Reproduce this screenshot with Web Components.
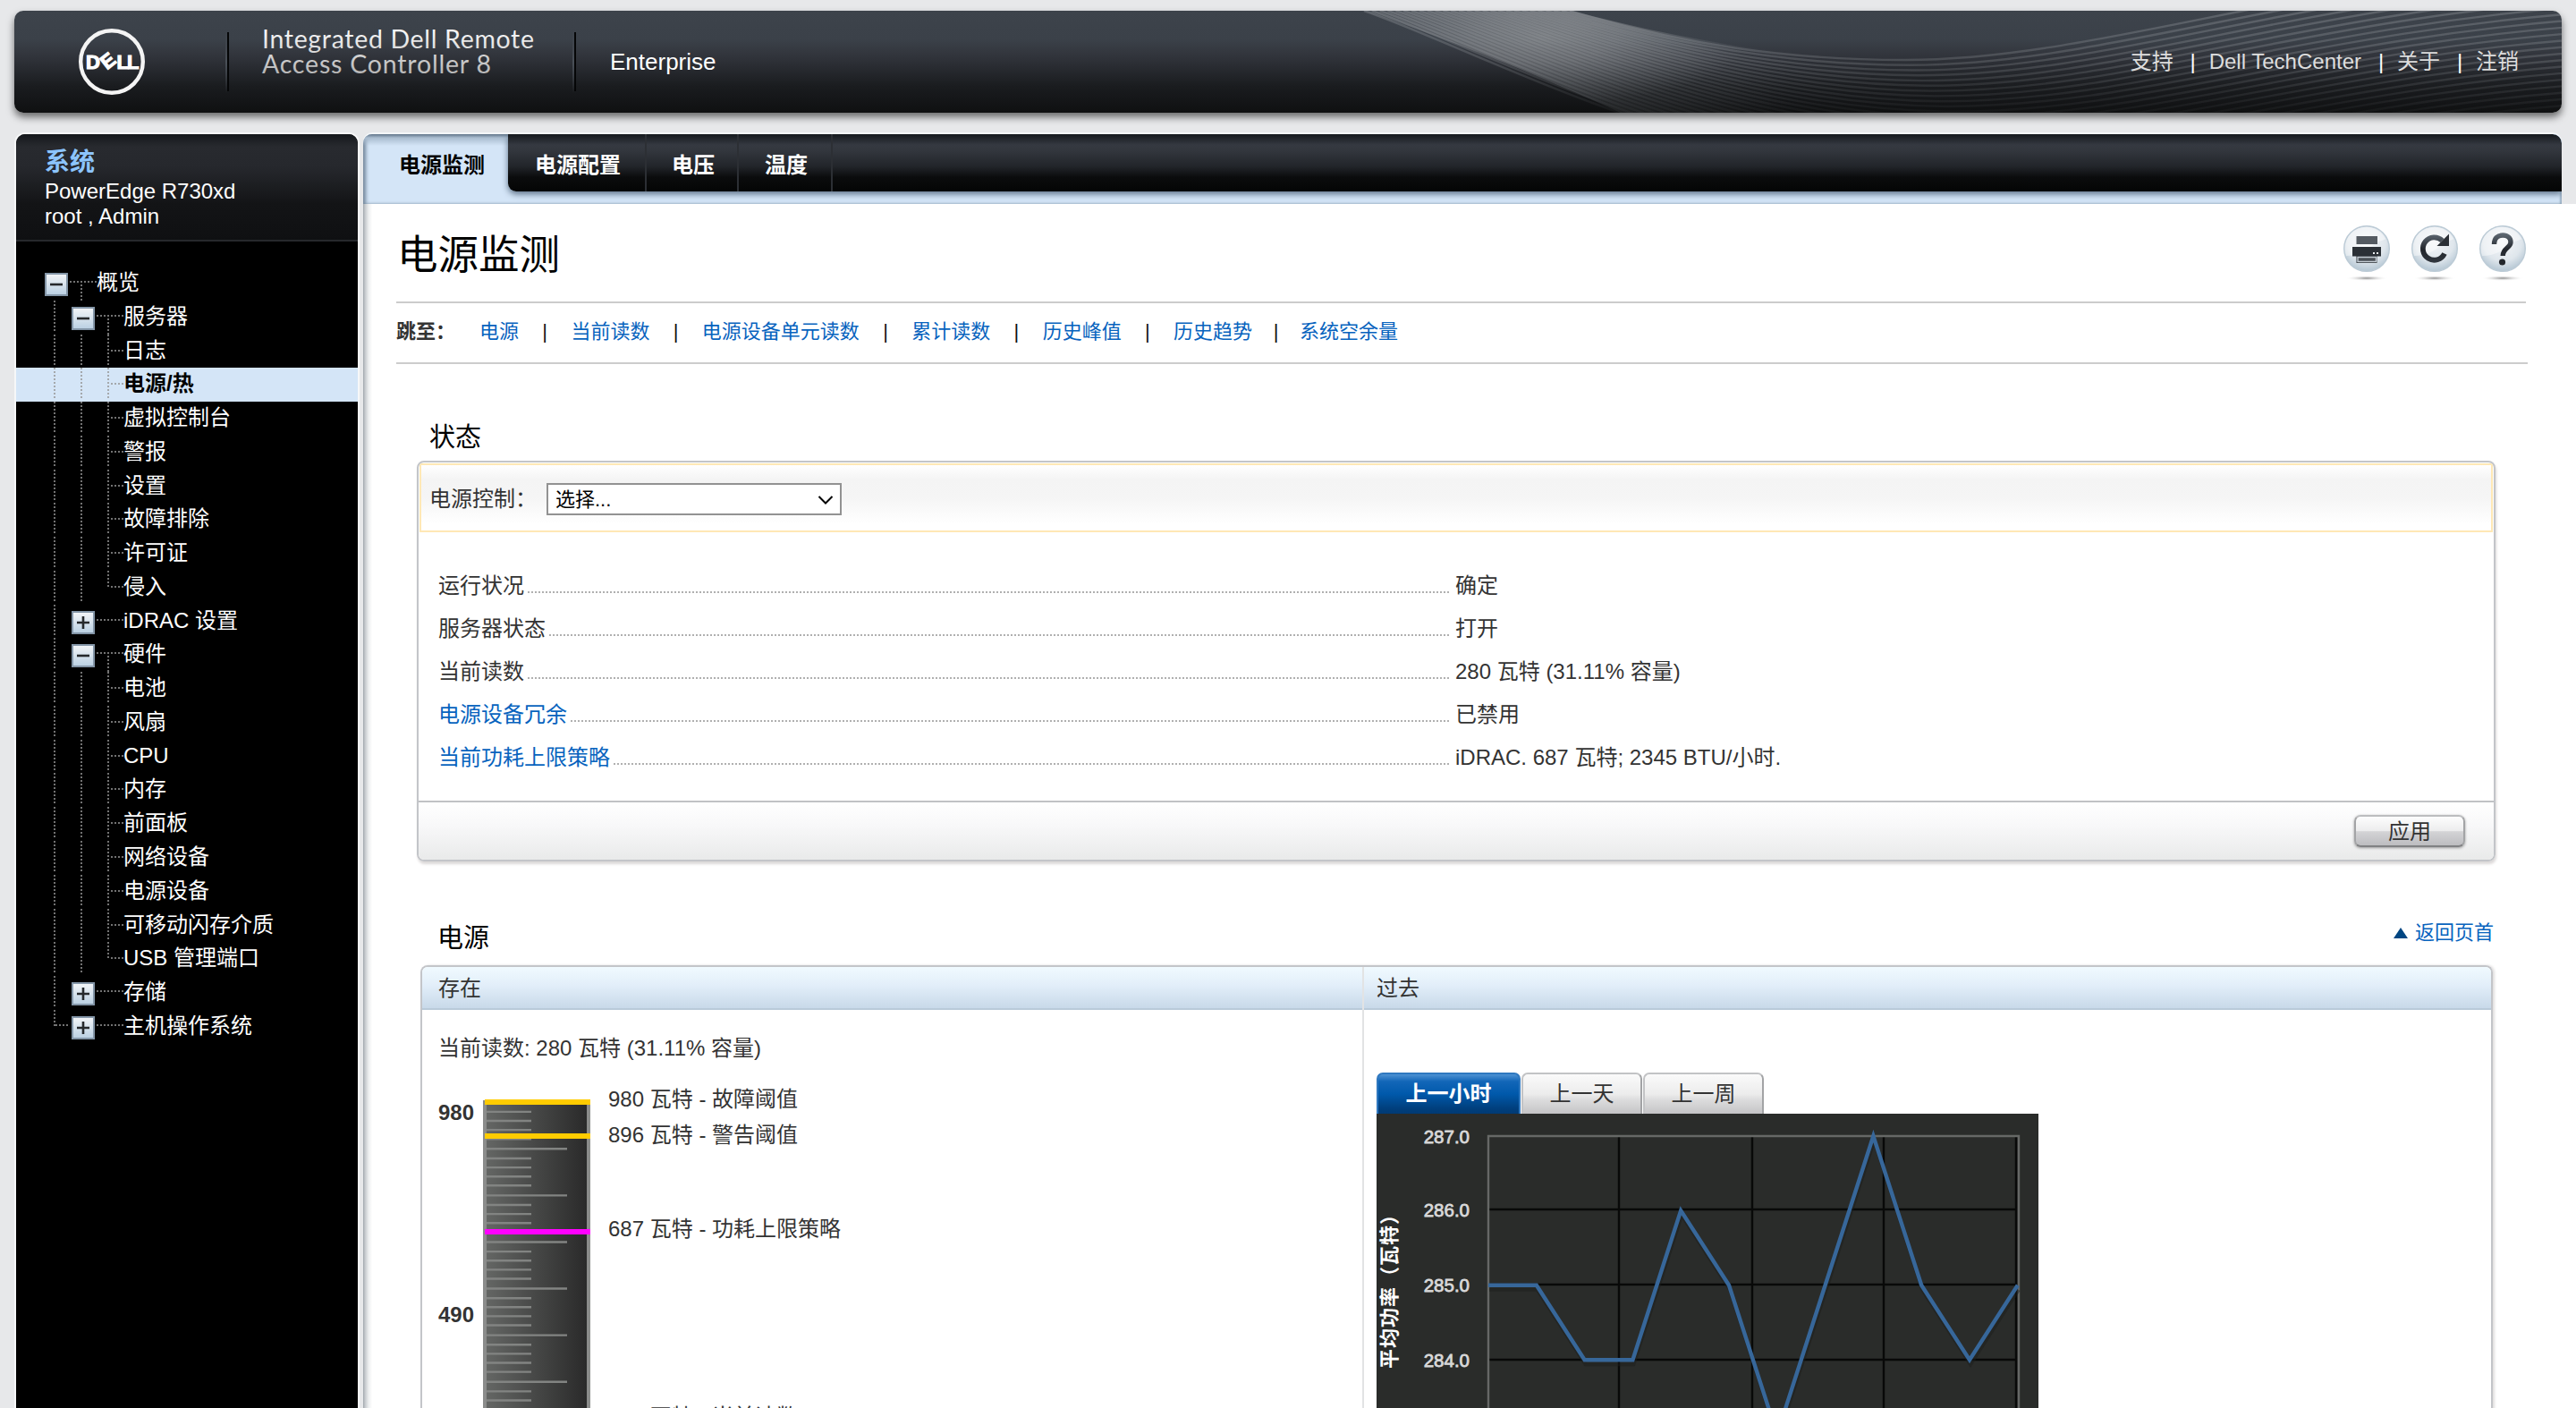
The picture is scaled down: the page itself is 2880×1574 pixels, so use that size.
<!DOCTYPE html>
<html lang="zh-CN">
<head>
<meta charset="utf-8">
<title>电源监测</title>
<style>
  html, body {
    height: 100%;
    margin: 0;
    overflow: hidden;
  }

  body {
    background-color: #e7e8ea;
    color: #333333;
    display: flex;
    flex-direction: column;
    font-family: 'Liberation Sans', 'Noto Sans CJK SC', sans-serif;
    font-size: 24px;
    line-height: 32px;
  }

  .columns {
    display: flex;
    flex: 1;
    flex-direction: row;
    margin-top: 24px;
    min-height: 0;
  }

  main {
    display: flex;
    flex: 1;
    flex-direction: column;
    margin-left: 6px;
    min-width: 0;
  }
</style>
</head>
<body>

<rac-header product="Enterprise">
  <a>支持</a>
  <a>Dell TechCenter</a>
  <a>关于</a>
  <a>注销</a>
</rac-header>

<div class="columns">
  <rac-sidebar>
    <span slot="title">系统</span>
    <span slot="model">PowerEdge R730xd</span>
    <span slot="user">root , Admin</span>
    <rac-node toggle="minus" root>概览</rac-node>
    <rac-node toggle="minus">服务器</rac-node>
    <rac-node>日志</rac-node>
    <rac-node selected>电源/热</rac-node>
    <rac-node>虚拟控制台</rac-node>
    <rac-node>警报</rac-node>
    <rac-node>设置</rac-node>
    <rac-node>故障排除</rac-node>
    <rac-node>许可证</rac-node>
    <rac-node last>侵入</rac-node>
    <rac-node toggle="plus">iDRAC 设置</rac-node>
    <rac-node toggle="minus">硬件</rac-node>
    <rac-node>电池</rac-node>
    <rac-node>风扇</rac-node>
    <rac-node>CPU</rac-node>
    <rac-node>内存</rac-node>
    <rac-node>前面板</rac-node>
    <rac-node>网络设备</rac-node>
    <rac-node>电源设备</rac-node>
    <rac-node>可移动闪存介质</rac-node>
    <rac-node last>USB 管理端口</rac-node>
    <rac-node toggle="plus">存储</rac-node>
    <rac-node toggle="plus" last>主机操作系统</rac-node>
  </rac-sidebar>

  <main>
    <rac-tabs>
      <rac-tab selected style="width: 162px">电源监测</rac-tab>
      <rac-tab style="width: 155px">电源配置</rac-tab>
      <rac-tab style="width: 103px">电压</rac-tab>
      <rac-tab style="width: 105px">温度</rac-tab>
    </rac-tabs>

    <rac-page label="电源监测">
      <rac-tool slot="tools" icon="print"></rac-tool>
      <rac-tool slot="tools" icon="refresh"></rac-tool>
      <rac-tool slot="tools" icon="help"></rac-tool>

      <rac-jump label="跳至：">
        <a>电源</a>
        <a>当前读数</a>
        <a>电源设备单元读数</a>
        <a>累计读数</a>
        <a>历史峰值</a>
        <a>历史趋势</a>
        <a>系统空余量</a>
      </rac-jump>

      <rac-status label="状态">
        <span slot="control">电源控制：</span>
        <rac-select slot="control">选择...</rac-select>
        <rac-field label="运行状况">确定</rac-field>
        <rac-field label="服务器状态">打开</rac-field>
        <rac-field label="当前读数">280 瓦特 (31.11% 容量)</rac-field>
        <rac-field label="电源设备冗余" link>已禁用</rac-field>
        <rac-field label="当前功耗上限策略" link>iDRAC. 687 瓦特; 2345 BTU/小时.</rac-field>
        <rac-button slot="actions">应用</rac-button>
      </rac-status>

      <rac-power label="电源" top="返回页首" present="存在" past="过去">
        <span slot="reading">当前读数: 280 瓦特 (31.11% 容量)</span>
        <rac-gauge slot="gauge"></rac-gauge>
        <rac-range slot="range" selected>上一小时</rac-range>
        <rac-range slot="range">上一天</rac-range>
        <rac-range slot="range">上一周</rac-range>
        <rac-chart slot="chart"></rac-chart>
      </rac-power>
    </rac-page>
  </main>
</div>

<script>
// Shared shadow root setup
class RacElement extends HTMLElement {
  constructor( markup ) {
    super();

    const template = document.createElement( 'template' );
    template.innerHTML = markup;

    this.attachShadow( {mode: 'open'} );
    this.shadowRoot.appendChild( template.content.cloneNode( true ) );
  }

  // Copy attribute value to an element in the root
  _text( selector, attribute ) {
    this.shadowRoot.querySelector( selector ).textContent = this.getAttribute( attribute ) || '';
  }
}

class RacHeader extends RacElement {
  constructor() {
    super( /* template */ `
      <style>
        :host {
          background: linear-gradient( #3d434b 0%, #3b4149 28%, #30333a 46%, #1a1c1f 74%, #0f1011 100% );
          border-radius: 10px;
          box-shadow: 0 5px 8px rgba( 0, 0, 0, 0.55 );
          box-sizing: border-box;
          color: #ffffff;
          display: flex;
          flex-direction: row;
          flex-shrink: 0;
          height: 114px;
          margin: 12px 16px 0 16px;
          position: relative;
        }

        svg.brand {
          flex-shrink: 0;
          height: 114px;
          width: 630px;
        }

        svg.wave {
          border-radius: 0 10px 10px 0;
          height: 114px;
          position: absolute;
          right: 0;
          top: 0;
          width: 1354px;
        }

        p {
          font-size: 26px;
          line-height: 114px;
          margin: 0 0 0 36px;
        }

        nav {
          align-items: center;
          color: #dddddd;
          display: flex;
          margin-left: auto;
          padding-right: 48px;
          position: relative;
        }

        ::slotted( a ) {
          white-space: nowrap;
        }
      </style>
      <svg class="brand" viewBox="16 12 630 114">
        <defs>
          <linearGradient id="ink" x1="0" y1="30" x2="0" y2="84" gradientUnits="userSpaceOnUse">
            <stop offset="0" stop-color="#ffffff"/>
            <stop offset="1" stop-color="#b4b4b4"/>
          </linearGradient>
          <linearGradient id="rule" x1="0" y1="34" x2="0" y2="104" gradientUnits="userSpaceOnUse">
            <stop offset="0" stop-color="#4a5058" stop-opacity="0"/>
            <stop offset="0.5" stop-color="#4a5058"/>
            <stop offset="1" stop-color="#4a5058" stop-opacity="0"/>
          </linearGradient>
        </defs>
        <circle cx="125" cy="69" r="34.8" fill="none" stroke="#f4f4f4" stroke-width="4.4"/>
        <text x="96 119.5 130.5 142" y="77 78.5 77 77" rotate="0 -38 0 0" fill="#ffffff" stroke="#ffffff" stroke-width="1.2" font-size="22" font-weight="700">DELL</text>
        <path d="M252 34H254V104H252ZM640 34H642V104H640Z" fill="url( #rule )"/>
        <path d="M255 36V102M643 36V102" stroke="#050607" stroke-width="2"/>
        <g fill="url( #ink )" font-family="Lato, sans-serif" font-size="28.5">
          <text x="293" y="54" textLength="304">Integrated Dell Remote</text>
          <text x="293" y="82" textLength="256">Access Controller 8</text>
        </g>
      </svg>
      <p></p>
      <svg class="wave" viewBox="1510 12 1354 114">
        <defs>
          <radialGradient id="glow" cx="0" cy="0" r="1" gradientUnits="userSpaceOnUse" gradientTransform="translate( 1725 42 ) scale( 230 75 )">
            <stop offset="0" stop-color="#8c8f92" stop-opacity="0.65"/>
            <stop offset="0.35" stop-color="#85888c" stop-opacity="0.5"/>
            <stop offset="1" stop-color="#70747a" stop-opacity="0"/>
          </radialGradient>
          <linearGradient id="haze" x1="1520" y1="0" x2="2000" y2="0" gradientUnits="userSpaceOnUse">
            <stop offset="0" stop-color="#90959a" stop-opacity="0.1"/>
            <stop offset="0.5" stop-color="#90959a" stop-opacity="0.16"/>
            <stop offset="1" stop-color="#90959a" stop-opacity="0"/>
          </linearGradient>
          <linearGradient id="fade" x1="0" y1="12" x2="0" y2="126" gradientUnits="userSpaceOnUse">
            <stop offset="0" stop-color="#a9adb2" stop-opacity="0.3"/>
            <stop offset="0.5" stop-color="#a0a4a8" stop-opacity="0.24"/>
            <stop offset="1" stop-color="#90959a" stop-opacity="0.05"/>
          </linearGradient>
        </defs>
        <path d="M1525 12C1580 30 1690 70 1812 126H2050V65C1950 55 1850 37 1757 12Z" fill="url( #haze )"/>
        <path d="M1525 12C1580 30 1690 70 1812 126H2050V65C1950 55 1850 37 1757 12Z" fill="url( #glow )"/>
        <g fill="none" stroke="url( #fade )" stroke-width="2.4"></g>
      </svg>
      <nav><slot></slot></nav>
    ` );

    // Fan of lines between the upper and the lower edge of the wave
    const from = [1755, 12, 1880, 50, 2000, 67, 2130, 67, 2340, 67, 2560, -20, 2900, -45];
    const to = [1525, 12, 1640, 50, 1930, 210, 2250, 217, 2480, 222, 2640, 160, 2900, 145];
    const group = this.shadowRoot.querySelector( 'svg.wave g' );
    const count = 27;

    for( let i = 0; i < count; i++ ) {
      const t = i / ( count - 1 );
      const p = from.map( ( value, index ) => ( value + ( to[index] - value ) * t ).toFixed( 1 ) );
      const path = document.createElementNS( 'http://www.w3.org/2000/svg', 'path' );
      path.setAttribute( 'd', `M${p.slice( 0, 2 )}C${p.slice( 2 )}` );
      group.appendChild( path );
    }
  }

  connectedCallback() {
    this._text( 'p', 'product' );

    // Divider before every link except the first
    this.querySelectorAll( 'a' ).forEach( ( link, index ) => {
      if( index > 0 ) {
        const bar = document.createElement( 'span' );
        bar.textContent = '|';
        bar.style.cssText = 'color: #ffffff; text-align: center; text-indent: 4px; width: 40px';
        this.insertBefore( bar, link );
      }
    } );
  }
}

class RacSidebar extends RacElement {
  constructor() {
    super( /* template */ `
      <style>
        :host {
          background-color: #000000;
          border-radius: 10px 10px 0 0;
          box-shadow: 0 0 0 2px #f6f7f8;
          box-sizing: border-box;
          color: #ffffff;
          display: flex;
          flex-direction: column;
          margin-left: 18px;
          width: 382px;
        }

        header {
          background: linear-gradient( #14171b 0, #282a2f 14px, #26282d 36px, #131416 78px, #0f1012 100% );
          border-bottom: 2px solid #26282c;
          border-radius: 10px 10px 0 0;
          box-sizing: border-box;
          display: flex;
          flex-direction: column;
          height: 120px;
          line-height: 28px;
          padding: 13px 0 0 32px;
        }

        header slot {
          display: block;
        }

        slot[name=title] {
          color: #8cc4fc;
          font-size: 28px;
          font-weight: 700;
          line-height: 37px;
        }

        nav {
          display: flex;
          flex-direction: column;
          padding-top: 28px;
        }
      </style>
      <header>
        <slot name="title"></slot>
        <slot name="model"></slot>
        <slot name="user"></slot>
      </header>
      <nav><slot></slot></nav>
    ` );
  }
}

class RacNode extends RacElement {
  constructor() {
    super( /* template */ `
      <style>
        :host {
          display: flex;
          flex-direction: row;
          height: 37.78px;
          line-height: 36px;
          white-space: nowrap;
        }

        :host( [selected] ) {
          background-color: #d4e5f7;
          color: #000000;
          font-weight: 700;
        }

        svg {
          flex-shrink: 0;
          height: 38px;
          width: 120px;
        }

        :host( [root] ) svg {
          width: 90px;
        }

        path.guide {
          fill: none;
          stroke: #727272;
          stroke-dasharray: 2 2;
          stroke-width: 2;
        }

        :host( [selected] ) path.guide {
          stroke: #a4a8ac;
        }
      </style>
      <svg>
        <defs>
          <linearGradient id="face" x1="0" y1="0" x2="0" y2="1">
            <stop offset="0" stop-color="#f4f6f8"/>
            <stop offset="1" stop-color="#b9cfe2"/>
          </linearGradient>
        </defs>
        <path class="guide"></path>
        <g class="box">
          <rect x="1" y="1" width="24" height="24" fill="url( #face )" stroke="#8496a8" stroke-width="2"/>
          <path class="sign" stroke="#26292c" stroke-width="2.6"></path>
        </g>
      </svg>
      <slot></slot>
    ` );
  }

  connectedCallback() {
    const toggle = this.getAttribute( 'toggle' );
    const root = this.hasAttribute( 'root' );
    const last = this.hasAttribute( 'last' );
    const box = this.shadowRoot.querySelector( '.box' );
    let d = '';

    if( root ) {
      d = 'M60 17H90M73 20V38';
    } else if( toggle ) {
      d = last ? 'M43 0V18M44 17H60M90 17H120' : 'M43 0V36M90 17H120';
      d += toggle === 'minus' ? 'M103 20V38' : '';
    } else {
      d = 'M43 0V36M73 0V36M106 18H120';
      d += last ? 'M103 0V20' : 'M103 0V36';
    }

    this.shadowRoot.querySelector( '.guide' ).setAttribute( 'd', d );

    if( toggle ) {
      box.setAttribute( 'transform', `translate( ${root ? 32 : 62} 7 )` );
      this.shadowRoot.querySelector( '.sign' ).setAttribute( 'd', toggle === 'minus' ? 'M6 13H20' : 'M6 13H20M13 6V20' );
    } else {
      box.remove();
    }
  }
}

class RacTabs extends RacElement {
  constructor() {
    super( /* template */ `
      <style>
        :host {
          background-color: #d4e5f7;
          border-radius: 10px 10px 0 0;
          box-shadow: 0 -2px 0 #f3f6f8, inset 4px 0 4px -1px #71859a, inset -2px 0 2px #9db2c6;
          display: flex;
          flex-direction: row;
          flex-shrink: 0;
          height: 78px;
          margin-right: 16px;
          overflow: hidden;
        }

        div {
          background: linear-gradient( #15191d 0, #353941 12px, #33373e 18px, #22252a 36px, #0b0c0d 48px, #040505 100% );
          border-radius: 0 10px 0 9px;
          box-shadow: 0 3px 7px #5d7187;
          display: flex;
          flex: 1;
          height: 64px;
        }
      </style>
      <slot name="selected"></slot>
      <div><slot></slot></div>
    ` );
  }

  connectedCallback() {
    const selected = this.querySelector( '[selected]' );

    if( selected !== null ) {
      selected.slot = 'selected';
    }
  }
}

class RacTab extends RacElement {
  constructor() {
    super( /* template */ `
      <style>
        :host {
          border-right: 2px solid #2c2f34;
          box-sizing: border-box;
          color: #ffffff;
          display: block;
          font-weight: 700;
          height: 64px;
          line-height: 70px;
          padding-left: 3px;
          text-align: center;
        }

        :host( [selected] ) {
          background: linear-gradient( #5f7489 0, #a9bccf 4px, rgba( 212, 229, 247, 0 ) 13px );
          border: none;
          color: #000000;
          padding-left: 14px;
        }
      </style>
      <slot></slot>
    ` );
  }
}

class RacPage extends RacElement {
  constructor() {
    super( /* template */ `
      <style>
        :host {
          background: linear-gradient( to right, #9fa5ab 0, #c4c8cc 2px, #eceeef 6px, #ffffff 10px );
          display: flex;
          flex: 1;
          flex-direction: column;
          min-height: 0;
          overflow: hidden;
          padding: 0 54px 0 37px;
        }

        header {
          border-bottom: 2px solid #cccccc;
          box-sizing: border-box;
          display: flex;
          flex-shrink: 0;
          gap: 24px;
          height: 111px;
          margin-right: 2px;
        }

        h1 {
          color: #000000;
          flex: 1;
          font-size: 45.5px;
          font-weight: 400;
          line-height: 116px;
          margin: 0;
          padding-left: 1px;
        }
      </style>
      <header>
        <h1></h1>
        <slot name="tools"></slot>
      </header>
      <slot></slot>
    ` );
  }

  connectedCallback() {
    this._text( 'h1', 'label' );
  }
}

class RacTool extends RacElement {
  constructor() {
    super( /* template */ `
      <style>
        :host {
          display: block;
          height: 64px;
          padding-top: 24px;
          width: 52px;
        }

        svg {
          display: block;
        }
      </style>
      <svg width="52" height="62" viewBox="0 0 52 62">
        <defs>
          <radialGradient id="ball" cx="0.5" cy="0.35" r="0.65">
            <stop offset="0" stop-color="#f4f6f8"/>
            <stop offset="0.65" stop-color="#dfe6ec"/>
            <stop offset="1" stop-color="#b4c6d3"/>
          </radialGradient>
          <linearGradient id="dark" x1="0" y1="10" x2="0" y2="44" gradientUnits="userSpaceOnUse">
            <stop offset="0" stop-color="#5c6670"/>
            <stop offset="0.5" stop-color="#22262c"/>
            <stop offset="1" stop-color="#343a42"/>
          </linearGradient>
          <radialGradient id="floor">
            <stop offset="0" stop-color="#8a8a8a"/>
            <stop offset="1" stop-color="#ffffff" stop-opacity="0"/>
          </radialGradient>
        </defs>
        <ellipse cx="26" cy="59" rx="24" ry="3" fill="url( #floor )"/>
        <circle cx="26" cy="26" r="25.3" fill="url( #ball )" stroke="#bccbd6" stroke-width="1.4"/>
        <path d="M3 34A24 24 0 0 1 47 15C43 18 38 17 33 22C25 30 14 34 3 34Z" fill="#ffffff" opacity="0.45"/>
        <g></g>
      </svg>
    ` );
  }

  connectedCallback() {
    const icons = {
      print: `
        <path d="M14.5 12H38V21H14.5Z" fill="#555b62"/>
        <path d="M10 24H42V34.5H37.5V42H14.5V34.5H10Z" fill="#2b3036"/>
        <path d="M16 35.5H36.5V40.5H16Z" fill="#4b5157" stroke="#c3ccd3" stroke-width="1.4"/>
        <path d="M33 31H35M37 31H39" stroke="#e9edf0" stroke-width="2"/>`,
      refresh: `
        <path d="M37 31.5A12.7 12.7 0 1 1 34.5 17" fill="none" stroke="url( #dark )" stroke-width="5.8"/>
        <path d="M42 9.5V23H28.5Z" fill="#2a2f35"/>`,
      help: `
        <path d="M16.5 21C16.5 13.5 21 11 26.2 11C31.8 11 35 14.5 35 18.8C35 25 26.2 25.5 26.2 34" fill="none" stroke="url( #dark )" stroke-width="5.4"/>
        <circle cx="25.500" cy="41" r="3.6" fill="#23272c"/>`
    };

    this.shadowRoot.querySelector( 'g' ).innerHTML = icons[this.getAttribute( 'icon' )];
  }
}

class RacJump extends RacElement {
  constructor() {
    super( /* template */ `
      <style>
        :host {
          align-items: center;
          border-bottom: 2px solid #cccccc;
          box-sizing: border-box;
          color: #0763be;
          display: flex;
          flex-shrink: 0;
          font-size: 22px;
          height: 68px;
          padding-bottom: 2px;
          white-space: nowrap;
        }

        b {
          color: #333333;
          width: 93px;
        }
      </style>
      <b></b>
      <slot></slot>
    ` );
  }

  connectedCallback() {
    this._text( 'b', 'label' );

    const links = this.querySelectorAll( 'a' );

    links.forEach( ( link, index ) => {
      if( index > 0 ) {
        const bar = document.createElement( 'span' );
        bar.textContent = '|';
        bar.style.cssText = 'color: #111111; text-align: center; width: 58.4px';
        if( index === links.length - 1 ) {
          bar.style.width = '53px';
        }
        this.insertBefore( bar, link );
      }
    } );
  }
}

class RacStatus extends RacElement {
  constructor() {
    super( /* template */ `
      <style>
        :host {
          display: block;
          flex-shrink: 0;
          margin: 62px 36px 0 23px;
        }

        h2 {
          color: #000000;
          font-size: 29px;
          font-weight: 400;
          line-height: 40px;
          margin: 0 0 6px 14px;
        }

        section {
          border: 2px solid #c3c5c9;
          border-radius: 8px;
          box-shadow: 1px 3px 3px #dcd9d9;
          box-sizing: border-box;
          display: flex;
          flex-direction: column;
          height: 448px;
          overflow: hidden;
        }

        .control {
          align-items: center;
          background: linear-gradient( #ffffff 0, #f4f4f4 16px, #f5f5f5 36px, #ffffff 66px );
          border: 2px solid #ffe8b5;
          box-sizing: border-box;
          display: flex;
          height: 77px;
          margin: 1px 1px 0 1px;
          padding: 2px 0 0 9px;
        }

        ::slotted( span ) {
          width: 131px;
        }

        .fields {
          flex: 1;
          padding: 36px 0 0 22px;
        }

        footer {
          align-items: flex-start;
          background: linear-gradient( #ffffff, #f8f8f9 40%, #e9eaea );
          border-top: 2px solid #c0c2c5;
          box-sizing: border-box;
          display: flex;
          height: 66px;
          justify-content: flex-end;
          padding: 14px 32px 0 0;
        }
      </style>
      <h2></h2>
      <section>
        <div class="control"><slot name="control"></slot></div>
        <div class="fields"><slot></slot></div>
        <footer><slot name="actions"></slot></footer>
      </section>
    ` );
  }

  connectedCallback() {
    this._text( 'h2', 'label' );
  }
}

class RacSelect extends RacElement {
  constructor() {
    super( /* template */ `
      <style>
        :host {
          align-items: center;
          background-color: #ffffff;
          border: 2px solid #929292;
          box-sizing: border-box;
          color: #000000;
          display: flex;
          font-size: 22px;
          height: 36px;
          justify-content: space-between;
          margin-top: 1px;
          padding: 1px 7px 0 8px;
          width: 330px;
        }
      </style>
      <slot></slot>
      <svg width="18" height="12" viewBox="0 0 18 12">
        <path d="M1.5 2L9 9.5L16.5 2" fill="none" stroke="#000000" stroke-width="2"/>
      </svg>
    ` );
  }
}

class RacField extends RacElement {
  constructor() {
    super( /* template */ `
      <style>
        :host {
          display: flex;
          flex-direction: row;
          height: 48px;
          line-height: 48px;
          white-space: nowrap;
        }

        div {
          display: flex;
          margin-right: 7px;
          width: 1130px;
        }

        :host( [link] ) label {
          color: #0763be;
        }

        i {
          background: repeating-linear-gradient( to right, #b0b0b0 0 2px, #ffffff 2px 4px );
          flex: 1;
          height: 2px;
          margin: 30px 0 0 4px;
        }
      </style>
      <div><label></label><i></i></div>
      <slot></slot>
    ` );
  }

  connectedCallback() {
    this._text( 'label', 'label' );
  }
}

class RacButton extends RacElement {
  constructor() {
    super( /* template */ `
      <style>
        :host {
          background: linear-gradient( #fdfdfd 0, #ececed 50%, #d4d4d6 52%, #bdbdc0 100% );
          border: 2px solid #a3a4a6;
          border-bottom-color: #808183;
          border-radius: 7px;
          border-top-color: #bcbdbf;
          box-shadow: 0 1px 3px #9a9a9a;
          box-sizing: border-box;
          display: block;
          height: 36px;
          line-height: 33px;
          text-align: center;
          width: 124px;
        }
      </style>
      <slot></slot>
    ` );
  }
}

class RacPower extends RacElement {
  constructor() {
    super( /* template */ `
      <style>
        :host {
          display: block;
          flex-shrink: 0;
          margin: 66px 39px 0 27px;
        }

        header {
          display: flex;
          justify-content: space-between;
          margin-bottom: 10px;
        }

        h2 {
          color: #000000;
          font-size: 29px;
          font-weight: 400;
          line-height: 40px;
          margin: 0 0 0 19px;
        }

        a {
          align-items: center;
          color: #0763be;
          display: flex;
          font-size: 22px;
          gap: 8px;
          height: 28px;
          margin-right: -1px;
        }

        section {
          border: 2px solid #c3c5c9;
          border-bottom: none;
          border-radius: 8px 8px 0 0;
          box-shadow: 2px 0 3px #e0dede;
          box-sizing: border-box;
          display: grid;
          grid-template-columns: 1051px 1fr;
          height: 700px;
          overflow: hidden;
        }

        h3 {
          background: linear-gradient( #f0faff, #e2eef9 45%, #c8d9e9 );
          border-bottom: 2px solid #b9cad9;
          box-sizing: border-box;
          font-size: 24px;
          font-weight: 400;
          height: 48px;
          line-height: 48px;
          margin: 0;
          padding-left: 18px;
        }

        .past {
          border-left: 2px solid #e2e3e4;
        }

        .past h3 {
          padding-left: 14px;
        }

        .reading {
          height: 36px;
          line-height: 38px;
          padding: 24px 0 0 18px;
        }

        .ranges {
          display: flex;
          gap: 1px;
          padding: 70px 0 0 14px;
        }

        .plot {
          padding-left: 14px;
        }
      </style>
      <header>
        <h2></h2>
        <a>
          <svg width="16" height="12" viewBox="0 0 16 12"><path d="M0 12L8 0L16 12Z" fill="#004682"/></svg>
          <span></span>
        </a>
      </header>
      <section>
        <div class="present">
          <h3></h3>
          <div class="reading"><slot name="reading"></slot></div>
          <slot name="gauge"></slot>
        </div>
        <div class="past">
          <h3></h3>
          <div class="ranges"><slot name="range"></slot></div>
          <div class="plot"><slot name="chart"></slot></div>
        </div>
      </section>
    ` );
  }

  connectedCallback() {
    this._text( 'h2', 'label' );
    this._text( 'a span', 'top' );
    this._text( '.present h3', 'present' );
    this._text( '.past h3', 'past' );
  }
}

class RacRange extends RacElement {
  constructor() {
    super( /* template */ `
      <style>
        :host {
          background: linear-gradient( #fafafa, #ececec 50%, #dcdcdd 65%, #c4c4c6 );
          border: 2px solid #c2c3c5;
          border-bottom: none;
          border-radius: 7px 7px 0 0;
          border-right-color: #a2a3a5;
          box-sizing: border-box;
          display: block;
          height: 46px;
          line-height: 43px;
          text-align: center;
          width: 135px;
        }

        :host( [selected] ) {
          background: linear-gradient( #4d92d3 0, #1266b8 8px, #0059ab 22px, #003f7d 38px, #003a74 100% );
          border-color: #2f78bf;
          color: #ffffff;
          font-weight: 700;
          width: 161px;
        }
      </style>
      <slot></slot>
    ` );
  }
}

class RacGauge extends RacElement {
  constructor() {
    super( /* template */ `
      <style>
        :host {
          display: block;
          height: 450px;
        }

        svg {
          display: block;
        }
      </style>
      <svg width="1000" height="450" viewBox="472 1189 1000 450">
        <defs>
          <linearGradient id="tube">
            <stop offset="0" stop-color="#646664"/>
            <stop offset="0.5" stop-color="#464746"/>
            <stop offset="1" stop-color="#2a2a2a"/>
          </linearGradient>
        </defs>
        <rect x="540" y="1230" width="120" height="420" fill="#8b8c8b"/>
        <rect x="544" y="1230" width="112" height="420" fill="url( #tube )"/>
        <path class="ticks" stroke="#828482" stroke-width="2.4"></path>
        <g class="marks"></g>
        <g font-size="24" font-weight="700" fill="#333333">
          <text x="490" y="1252">980</text>
          <text x="490" y="1478">490</text>
        </g>
        <g class="labels" font-size="24" fill="#333333"></g>
      </svg>
    ` );

    let d = '';

    for( let i = 0; i < 7; i++ ) {
      const y = 1232.2 + i * 52.08;
      d += i > 0 ? `M544 ${y}H634` : '';
      for( let j = 1; j < 5; j++ ) {
        d += `M544 ${y + j * 10.1 + 0.6}H594`;
      }
    }

    this.shadowRoot.querySelector( '.ticks' ).setAttribute( 'd', d );

    // Thresholds, top edge of bar and text baseline
    const marks = [
      [1229, '#ffcc00', 1237, '980 瓦特 - 故障阈值'],
      [1267, '#ffcc00', 1277, '896 瓦特 - 警告阈值'],
      [1374, '#ff00ff', 1382, '687 瓦特 - 功耗上限策略'],
      [1650, '#00cc00', 1592, '280 瓦特 - 当前读数']
    ];

    this.shadowRoot.querySelector( '.marks' ).innerHTML = marks.map( ( [y, color] ) => `<rect x="542" y="${y}" width="118" height="6" fill="${color}"/>` ).join( '' );
    this.shadowRoot.querySelector( '.labels' ).innerHTML = marks.map( ( [, , y, label] ) => `<text x="680" y="${y}">${label}</text>` ).join( '' );
  }
}

class RacChart extends RacElement {
  constructor() {
    super( /* template */ `
      <style>
        :host {
          display: block;
        }

        svg {
          background-color: #2a2c2a;
          display: block;
        }
      </style>
      <svg width="740" height="400" viewBox="1539 1245 740 400">
        <path d="M1810 1270V1645M1959 1270V1645M2106 1270V1645M2254 1270V1645M1664 1352H2255M1664 1436H2255M1664 1520H2255" stroke="#080908" stroke-width="2.4"/>
        <path d="M1664 1645V1270H2257V1645" fill="none" stroke="#666866" stroke-width="2.4"/>
        <g fill="#d8d8d8" stroke="#d8d8d8" stroke-width="0.8" font-size="20.5" text-anchor="end">
          <text x="1643" y="1278">287.0</text>
          <text x="1643" y="1360">286.0</text>
          <text x="1643" y="1444">285.0</text>
          <text x="1643" y="1528">284.0</text>
        </g>
        <text transform="translate( 1561 1530 ) rotate( -90 )" fill="#ffffff" font-size="22" font-weight="700" textLength="183">平均功率（瓦特）</text>
        <polyline class="shadow" transform="translate( 1 5 )" fill="none" stroke="#1c1e1c" stroke-opacity="0.5" stroke-width="4"/>
        <polyline class="line" fill="none" stroke="#37679a" stroke-width="4.4"/>
      </svg>
    ` );

    const watts = [285, 285, 284, 284, 286, 285, 283, 285, 287, 285, 284, 285];
    const points = watts.map( ( value, index ) => `${1664 + index * 53.8},${1270 + ( 287 - value ) * 83.4}` ).join( ' ' );

    this.shadowRoot.querySelectorAll( 'polyline' ).forEach( ( line ) => line.setAttribute( 'points', points ) );
  }
}

window.customElements.define( 'rac-header', RacHeader );
window.customElements.define( 'rac-sidebar', RacSidebar );
window.customElements.define( 'rac-node', RacNode );
window.customElements.define( 'rac-tabs', RacTabs );
window.customElements.define( 'rac-tab', RacTab );
window.customElements.define( 'rac-page', RacPage );
window.customElements.define( 'rac-tool', RacTool );
window.customElements.define( 'rac-jump', RacJump );
window.customElements.define( 'rac-status', RacStatus );
window.customElements.define( 'rac-select', RacSelect );
window.customElements.define( 'rac-field', RacField );
window.customElements.define( 'rac-button', RacButton );
window.customElements.define( 'rac-power', RacPower );
window.customElements.define( 'rac-range', RacRange );
window.customElements.define( 'rac-gauge', RacGauge );
window.customElements.define( 'rac-chart', RacChart );
</script>
</body>
</html>
